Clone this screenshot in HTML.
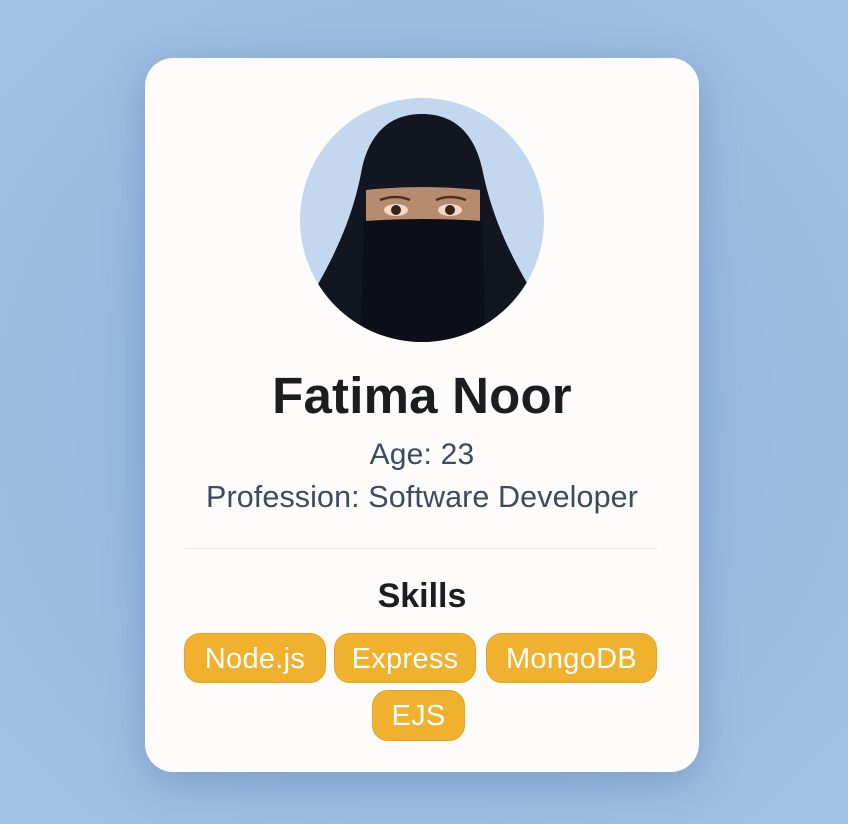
<!DOCTYPE html>
<html><head><meta charset="utf-8"><style>
html,body{margin:0;padding:0}
body{width:848px;height:824px;background:radial-gradient(ellipse at 50% 50%,#8fb2dc 0%,#a3c1e2 100%);font-family:"Liberation Sans",sans-serif;position:relative;overflow:hidden}
.card{position:absolute;left:145px;top:58px;width:554px;height:714px;background:#fdfcfb;border-radius:28px;box-shadow:0 10px 40px rgba(60,100,160,.35)}
.av{position:absolute;left:155px;top:40px;width:244px;height:244px}
.t{position:absolute;left:0;width:554px;text-align:center}
.name{top:308px;font-size:51px;font-weight:bold;color:#1b1d21;letter-spacing:0.2px}
.age{top:380px;font-size:30px;color:#3d4b5e;letter-spacing:0.2px}
.prof{top:422px;font-size:30.5px;color:#3d4b5e;letter-spacing:0.1px}
.hr{position:absolute;left:40px;width:472px;top:490px;height:1px;background:#e3e5ec}
.sk{top:519px;font-size:34px;font-weight:bold;color:#1b1d21}
.tag{position:absolute;height:50px;line-height:50px;border-radius:16px;background:#f0b12e;border:1px solid #e2a426;box-sizing:border-box;color:#fff;font-size:29px;text-align:center;letter-spacing:0.3px}
</style></head><body>
<div class="card">
<svg class="av" viewBox="0 0 244 244">
<defs><clipPath id="c"><circle cx="122" cy="122" r="122"/></clipPath></defs>
<circle cx="122" cy="122" r="122" fill="#c3d8ef"/>
<g clip-path="url(#c)">
<path d="M122 16 C90 16 70 35 62 70 C55 110 40 150 10 200 L0 250 L244 250 L236 200 C205 150 190 110 182 70 C174 35 154 16 122 16Z" fill="#111620"/>
<path d="M66 92 Q122 86 180 92 L180 124 Q122 120 66 124Z" fill="#b68b6e"/>
<ellipse cx="96" cy="112" rx="12" ry="6" fill="#f0d9c8"/><circle cx="96" cy="112" r="5" fill="#3a2216"/>
<ellipse cx="150" cy="112" rx="12" ry="6" fill="#f0d9c8"/><circle cx="150" cy="112" r="5" fill="#3a2216"/>
<path d="M80 102 Q96 96 110 102" stroke="#4a3024" stroke-width="2.5" fill="none"/>
<path d="M136 102 Q150 96 166 102" stroke="#4a3024" stroke-width="2.5" fill="none"/>
<path d="M64 123 Q122 119 182 123 L186 250 L60 250Z" fill="#0c0f17"/>
</g></svg>
<div class="t name">Fatima Noor</div>
<div class="t age">Age: 23</div>
<div class="t prof">Profession: Software Developer</div>
<div class="hr"></div>
<div class="t sk">Skills</div>
<div class="tag" style="left:39px;top:575px;width:142px">Node.js</div>
<div class="tag" style="left:189px;top:575px;width:142px">Express</div>
<div class="tag" style="left:341px;top:575px;width:171px">MongoDB</div>
<div class="tag" style="left:227px;top:632px;width:93px;height:51px">EJS</div>
</div>
</body></html>
